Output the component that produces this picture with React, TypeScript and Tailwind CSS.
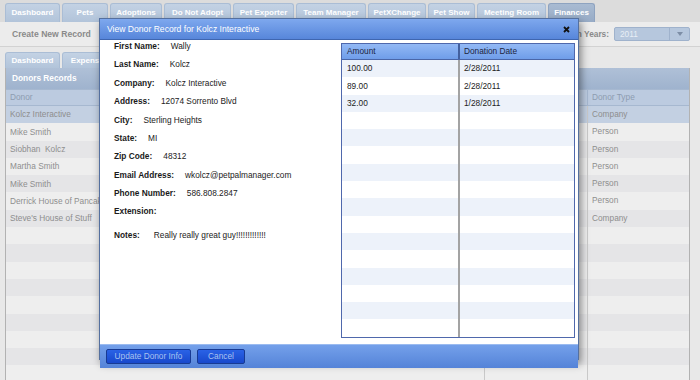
import React from "react";

const topTabs = [
  { label: "Dashboard", w: 55 },
  { label: "Pets", w: 46 },
  { label: "Adoptions", w: 52 },
  { label: "Do Not Adopt", w: 67 },
  { label: "Pet Exporter", w: 61 },
  { label: "Team Manager", w: 70 },
  { label: "PetXChange", w: 58 },
  { label: "Pet Show", w: 47 },
  { label: "Meeting Room", w: 69 },
  { label: "Finances", w: 47, active: true },
];

const donors = [
  { name: "Kolcz Interactive", type: "Company" },
  { name: "Mike Smith", type: "Person" },
  { name: "Siobhan  Kolcz", type: "Person" },
  { name: "Martha Smith", type: "Person" },
  { name: "Mike Smith", type: "Person" },
  { name: "Derrick House of Pancakes", type: "Person" },
  { name: "Steve's House of Stuff", type: "Company" },
];

const fields = [
  { label: "First Name:", value: "Wally" },
  { label: "Last Name:", value: "Kolcz" },
  { label: "Company:", value: "Kolcz Interactive" },
  { label: "Address:", value: "12074 Sorrento Blvd" },
  { label: "City:", value: "Sterling Heights" },
  { label: "State:", value: "MI" },
  { label: "Zip Code:", value: "48312" },
  { label: "Email Address:", value: "wkolcz@petpalmanager.com" },
  { label: "Phone Number:", value: "586.808.2847" },
  { label: "Extension:", value: "" },
];

const donations = [
  { amount: "100.00", date: "2/28/2011" },
  { amount: "89.00", date: "2/28/2011" },
  { amount: "32.00", date: "1/28/2011" },
];

const font = { fontFamily: '"Liberation Sans", Arial, sans-serif' };

function DonorRow({ i, name, type }: { i: number; name: string; type: string }) {
  const bg = i === 0 ? "bg-[#c3d0e2]" : i % 2 === 1 ? "bg-[#eeeeee]" : "bg-[#e5e5e7]";
  return (
    <div className={`flex h-[17.3px] shrink-0 items-center text-[8.3px] text-[#8e8e8e] ${bg}`}>
      <div className="w-[478px] truncate whitespace-pre pl-[4px]">{name}</div>
      <div className="h-full w-[103px] border-l border-[#c9c9c9]"></div>
      <div className="h-full flex-1 border-l border-[#c9c9c9] pl-[4px] leading-[17.3px]">{type}</div>
    </div>
  );
}

export default function App() {
  const emptyDonorRows = Array.from({ length: 12 });
  const tableRows = Array.from({ length: 16 }, (_, i) => donations[i] ?? null);

  return (
    <div className="relative h-[380px] w-[700px] overflow-hidden bg-[#e8e8e8]" style={font}>
      {/* top tab bar */}
      <div className="flex h-[22px] gap-[2px] bg-[#dcdcdc] pl-[5px] pt-[3px]">
        {topTabs.map((t) => (
          <div
            key={t.label}
            style={{ width: t.w }}
            className={`flex h-[19px] items-center justify-center rounded-t-[3px] border border-b-0 text-[8px] font-bold text-white ${
              t.active
                ? "border-[#8ea3c0] bg-gradient-to-b from-[#a9bbd2] to-[#97abc6]"
                : "border-[#aabdd5] bg-gradient-to-b from-[#c3d2e4] to-[#b2c4da]"
            }`}
          >
            {t.label}
          </div>
        ))}
      </div>

      {/* toolbar */}
      <div className="flex h-[25px] items-center justify-between border-b border-[#d2d2d2] bg-[#ececec] pl-[12px] pr-[10px]">
        <span className="text-[8.6px] font-bold text-[#8a8a8a]">Create New Record</span>
        <div className="flex items-center gap-[5px]">
          <span className="text-[8.3px] font-bold text-[#8a8a8a]">Donation Years:</span>
          <div className="flex h-[14px] w-[76px] items-center rounded-[2px] border border-[#9fb2cc] bg-[#b6c7dd]">
            <span className="flex-1 pl-[5px] text-[8.3px] text-[#e8eef5]">2011</span>
            <div className="flex h-full w-[20px] items-center justify-center border-l border-[#9fb2cc]">
              <svg width="6" height="4" viewBox="0 0 6 4">
                <path d="M0 0h6L3 4z" fill="#7d8ea6" />
              </svg>
            </div>
          </div>
        </div>
      </div>

      {/* sub tabs */}
      <div className="flex h-[21px] items-end gap-[2px] pl-[5px]">
        {["Dashboard", "Expenses"].map((t) => (
          <div
            key={t}
            className="flex h-[16px] w-[55px] items-center justify-center rounded-t-[3px] border border-b-0 border-[#aabdd5] bg-gradient-to-b from-[#c3d2e4] to-[#b2c4da] text-[8px] font-bold text-white"
          >
            {t}
          </div>
        ))}
      </div>

      {/* donors panel */}
      <div className="ml-[5px] flex h-[312px] w-[685px] flex-col border-x border-[#b2b2b2] bg-[#eeeeee]">
        <div className="flex h-[21px] shrink-0 items-center bg-gradient-to-b from-[#afc0d7] to-[#9fb3ce] pl-[6px] text-[8.3px] font-bold text-white">
          Donors Records
        </div>
        <div className="flex h-[17px] shrink-0 items-center border-y border-[#a6b8d0] bg-[#bccbe0] text-[8.3px] text-[#8d9cb0]">
          <div className="w-[478px] pl-[4px]">Donor</div>
          <div className="h-full w-[103px] border-l border-[#a6b8d0]"></div>
          <div className="h-full flex-1 border-l border-[#a6b8d0] pl-[4px] leading-[15px]">Donor Type</div>
        </div>
        {donors.map((d, i) => (
          <DonorRow key={i} i={i} name={d.name} type={d.type} />
        ))}
        {emptyDonorRows.map((_, j) => (
          <DonorRow key={`e${j}`} i={donors.length + j} name="" type="" />
        ))}
      </div>

      {/* modal */}
      <div className="absolute left-[99px] top-[18px] flex h-[342px] w-[480px] flex-col border border-[#55709f] bg-white shadow-[2px_4px_8px_rgba(0,0,0,0.45)]">
        <div className="flex h-[21px] shrink-0 items-center justify-between border-b border-[#3f66b0] bg-gradient-to-b from-[#7ea8ee] to-[#5786da] pl-[7px] pr-[8px]">
          <span className="text-[8.6px] text-white">View Donor Record for Kolcz Interactive</span>
          <svg width="7" height="7" viewBox="0 0 7 7">
            <path d="M1 1l5 5M6 1L1 6" stroke="#111" strokeWidth="1.8" />
          </svg>
        </div>

        <div className="flex flex-1">
          <div className="-mt-[3px] w-[241px] pl-[14px]">
            {fields.map((f) => (
              <div key={f.label} className="flex h-[18.4px] items-center text-[8.3px]">
                <span className="font-bold text-[#1a1a1a]">{f.label}</span>
                <span className="ml-[11px] text-[#222]">{f.value}</span>
              </div>
            ))}
            <div className="mt-[5px] flex h-[18.4px] items-center text-[8.3px]">
              <span className="font-bold text-[#1a1a1a]">Notes:</span>
              <span className="ml-[14px] text-[#222]">Really really great guy!!!!!!!!!!!!!</span>
            </div>
          </div>

          <div className="flex-1 pb-[6px] pr-[3px] pt-[3px]">
            <div className="flex h-full flex-col overflow-hidden border border-[#4f68ac]">
              <div className="flex h-[16px] shrink-0 border-b border-[#4a66a8] bg-gradient-to-b from-[#93b9f5] to-[#6f9de9] text-[8.3px] text-[#1c2540]">
                <div className="flex w-[116px] items-center pl-[5px]">Amount</div>
                <div className="flex flex-1 items-center border-l-2 border-[#43609e] pl-[4px]">Donation Date</div>
              </div>
              {tableRows.map((r, i) => (
                <div
                  key={i}
                  className={`flex h-[17.3px] shrink-0 text-[8.3px] text-[#222] ${i % 2 === 0 ? "bg-[#edf2fa]" : "bg-white"}`}
                >
                  <div className="flex w-[116px] items-center pl-[5px]">{r?.amount}</div>
                  <div className="flex flex-1 items-center border-l-2 border-[#a3a3a3] pl-[4px]">{r?.date}</div>
                </div>
              ))}
            </div>
          </div>
        </div>

        <div className="flex h-[24px] shrink-0 items-center gap-[6px] border-t border-[#9bbbf0] bg-gradient-to-b from-[#74a0ea] to-[#5483d8] pl-[6px]">
          <button className="flex h-[15px] w-[85px] items-center justify-center rounded-[2px] border border-[#173a94] bg-gradient-to-b from-[#2a62e6] to-[#1848cc] text-[8.3px] text-[#a9c2f0]">
            Update Donor Info
          </button>
          <button className="flex h-[15px] w-[48px] items-center justify-center rounded-[2px] border border-[#173a94] bg-gradient-to-b from-[#2a62e6] to-[#1848cc] text-[8.3px] text-[#a9c2f0]">
            Cancel
          </button>
        </div>
      </div>
    </div>
  );
}
